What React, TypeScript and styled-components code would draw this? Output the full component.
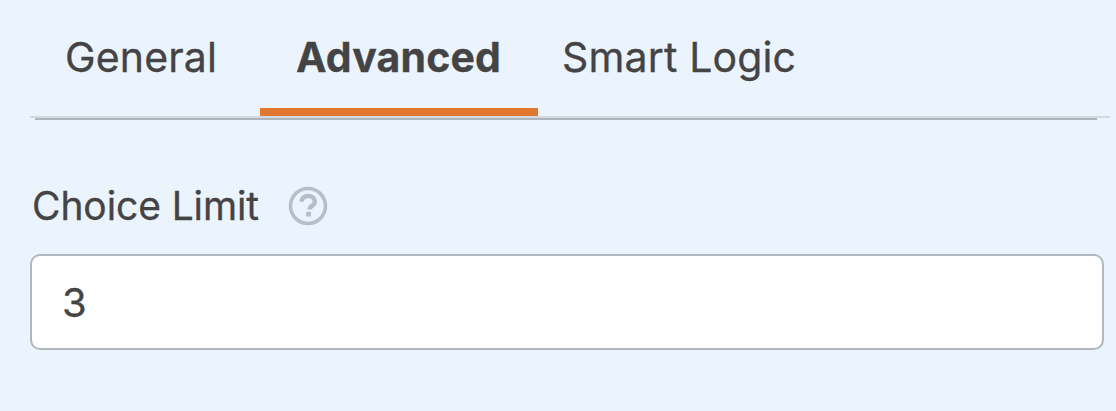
import styled, { createGlobalStyle } from "styled-components";

const GlobalStyle = createGlobalStyle`
    html, body {
        margin: 0;
        padding: 0;
        background-color: #ebf3fc;
    }

    body {
        font-family: "Inter", "Liberation Sans", sans-serif;
        color: #444444;
    }
`;

const Page = styled.div`
    width: 1116px;
    height: 411px;
    overflow: hidden;
    background-color: #ebf3fc;
`;

const TabBar = styled.nav`
    display: flex;
    height: 116px;
    margin-left: 30px;
`;

const Tab = styled.a<{ $left: number; $width: number; $active?: boolean }>`
    box-sizing: border-box;
    width: ${(p) => p.$width}px;
    height: 116px;
    padding: 33px 0 0 ${(p) => p.$left}px;
    font-size: 41px;
    line-height: 48px;
    font-weight: ${(p) => (p.$active ? 700 : 400)};
    letter-spacing: 0.15px;
    -webkit-text-stroke: 0.3px #444444;
    white-space: nowrap;
    border-bottom: 8px solid ${(p) => (p.$active ? "#e27730" : "transparent")};
`;

const RuleLight = styled.div`
    width: 1080px;
    height: 2px;
    margin-left: 30px;
    background-color: #d3d9e0;
`;

const RuleDark = styled.div`
    width: 1062px;
    height: 2px;
    margin-left: 35px;
    background-color: #aeb5bd;
`;

const Field = styled.div`
    display: flex;
    flex-direction: column;
    margin: 63px 0 0 30px;
    width: 1074px;
`;

const LabelRow = styled.div`
    display: flex;
    align-items: center;
    gap: 29px;
    height: 46px;
    padding-left: 2px;
`;

const Label = styled.label`
    font-size: 39px;
    line-height: 46px;
    letter-spacing: -0.1px;
    -webkit-text-stroke: 0.3px #444444;
`;

const HelpIcon = styled.svg`
    width: 40px;
    height: 40px;
    flex-shrink: 0;
`;

const Input = styled.div`
    box-sizing: border-box;
    height: 96px;
    margin-top: 25px;
    padding-left: 30px;
    border: 2px solid #b0b7c0;
    border-radius: 10px;
    background-color: #ffffff;
    font-size: 40px;
    line-height: 94px;
    -webkit-text-stroke: 0.3px #444444;
`;

function App() {
    return (
        <Page>
            <GlobalStyle />
            <TabBar>
                <Tab $left={35} $width={230}>General</Tab>
                <Tab $left={36} $width={278} $active>Advanced</Tab>
                <Tab $left={24} $width={280}>Smart Logic</Tab>
            </TabBar>
            <RuleLight />
            <RuleDark />
            <Field>
                <LabelRow>
                    <Label>Choice Limit</Label>
                    <HelpIcon viewBox="0 0 40 40" aria-hidden="true">
                        <circle cx="20" cy="20" r="17.5" fill="none" stroke="#b6bec7" strokeWidth="3.6" />
                        <path
                            d="M13.4 15.8c.3-3.6 2.9-5.8 6.8-5.8 3.9 0 6.6 2.1 6.6 5.3 0 2.3-1.2 3.6-3 4.7-1.6 1-2.1 1.7-2.1 3.4"
                            fill="none"
                            stroke="#b6bec7"
                            strokeWidth="4.4"
                        />
                        <rect x="18.2" y="25.8" width="4.8" height="4.8" rx="0.6" fill="#b6bec7" />
                    </HelpIcon>
                </LabelRow>
                <Input>3</Input>
            </Field>
        </Page>
    );
}

export default App;
